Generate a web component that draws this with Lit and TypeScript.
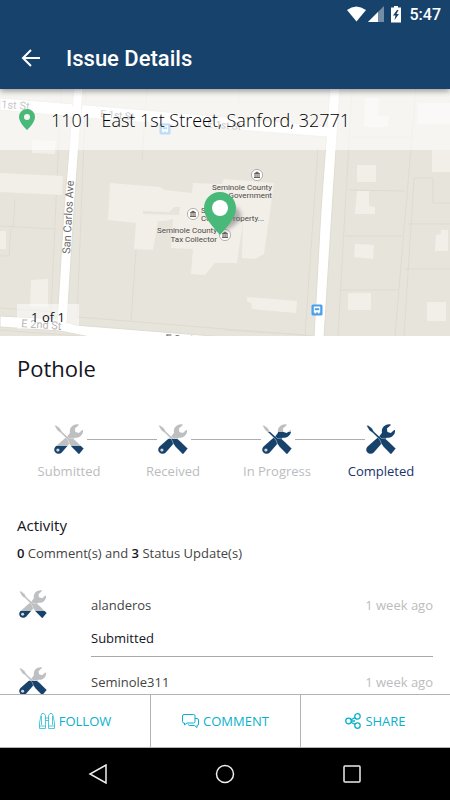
import { LitElement, html, svg, css } from "lit";
import { customElement, property } from "lit/decorators.js";

const FONT = css`"Open Sans", "Noto Sans", sans-serif`;

/** Crossed wrench and screwdriver, filled with navy from the bottom up to `level` (0..30). */
@customElement("tools-icon")
class ToolsIcon extends LitElement {
  @property({ type: Number }) level = 30;

  static styles = css`
    :host { display: block; width: 30px; height: 30px; }
    svg { display: block; width: 100%; height: 100%; }
  `;

  render() {
    const edge = 1 - this.level / 30;
    const full = this.level >= 30;
    return html`<svg viewBox="0 0 30 30" aria-hidden="true">
      <defs>
        <linearGradient id="tone" gradientUnits="userSpaceOnUse" x1="0" y1="0" x2="0" y2="30">
          <stop offset=${edge} stop-color="#bdbfc1"></stop>
          <stop offset=${edge} stop-color="#17426b"></stop>
        </linearGradient>
      </defs>
      <path fill="url(#tone)" d="M24.500.3C19.500-.6 14.800 3.500 16 8.800L13.500 12 1.600 22.600A4.600 4.600 0 0 0 1.400 28.600 4.500 4.500 0 0 0 7.800 28.400L18.600 16 20.600 13.700C25.500 14.300 29.400 10.800 29 6.300L28.200 6 24.800 8.900 21.400 7.900 20.900 4.600 24.600 1.200Z"></path>
      <path fill="url(#tone)" stroke="#fff" stroke-width=".4" d="M.6 1.800 2 1.200 6 4.200 7.800 7.400 15.400 14.400 19 14.400 22 17 29.800 24.600 25 30.500 17.400 22.800 15.200 19.600 14 16 6.600 8.800 3.400 6.600Z"></path>
      <circle cx="3.900" cy="26" r="1.600" fill=${full ? "#17426b" : "#d5d9dd"}></circle>
    </svg>`;
  }
}

const poi = (x: number, y: number) => svg`
  <circle cx=${x} cy=${y} r="5.6" fill="#fff" stroke="#a5a09b" stroke-width=".8"></circle>
  <path fill="#6c625c" d="M${x - 3} ${y - 1.4}l3-2 3 2v.6h-6zM${x - 2.5} ${y - 0.6}h1.1v2.8h-1.1zM${x - 0.5} ${y - 0.6}h1.1v2.8h-1.1zM${x + 1.5} ${y - 0.6}h1.1v2.8h-1.1zM${x - 3} ${y + 2.1}h6v1h-6z"></path>`;

const bus = (x: number, y: number) => svg`
  <rect x=${x - 5.5} y=${y - 5.5} width="11" height="11" rx="1.5" fill="#4ba0ee"></rect>
  <path fill="#fff" d="M${x - 3.2} ${y - 3.4}h6.4v6h-.8v1h-1.4v-1h-2v1h-1.4v-1h-.8z"></path>
  <path fill="#4ba0ee" d="M${x - 2.2} ${y - 1.8}h4.4v2h-4.4z"></path>`;

const pin = svg`<path fill="#48b978" fill-rule="evenodd" d="M8 0A8 8 0 0 0 0 8C0 14 8 21 8 21S16 14 16 8A8 8 0 0 0 8 0ZM8 5A3 3 0 1 1 8 11 3 3 0 0 1 8 5Z"></path>`;

@customElement("street-map")
class StreetMap extends LitElement {
  static styles = css`
    :host { display: block; }
    svg { display: block; width: 100%; height: 100%; }
    .lot { fill: none; stroke: #dfdbd1; stroke-width: 1; }
    .building { fill: #f2efe9; }
    .road { fill: #fff; stroke: #e0dccf; stroke-width: 1; }
    .place { font: 8px Roboto, sans-serif; fill: #4d4845; stroke: #f2efe9; stroke-width: 1px; paint-order: stroke; }
    .street { font: 11px Roboto, sans-serif; fill: #6b6b6b; }
    .small { font-size: 10px; }
    .shadow { fill: #6b6b6b; opacity: .5; filter: blur(2px); }
  `;

  render() {
    return html`<svg viewBox="0 89 450 247" preserveAspectRatio="xMidYMid slice" role="img" aria-label="Map of East 1st Street">
      <rect x="0" y="89" width="450" height="247" fill="#e7e4dc"></rect>
      <path class="lot" d="M61 89L51 315M86 89L77 318M147 89L142 160M136 250L131 321M0 226L55 229M0 308L56 312M77 317L225 329 314 336M240 89L238 104M318 148L305 336M352 89L338 336M352 137H412M350 190L405 191M345 236H402M341 290H398M416 89L395 336M404 336L414 178H433V203H450M408 224H450M405 269H450M11 229L9 256H0M15 200L13 229M0 330L80 336M225 330L306 335M418 111H450"></path>
      <path class="building" d="M32 140L56 141 55 154 32 153ZM0 173L63 176 62 195 0 192ZM110 183L160 187 165 190 192 193 193 183 222 184 224 179 274 183 268 226 264 254 255 259 242 258 243 221 237 263 215 263 205 275 191 274 193 249 171 248 173 219 165 221 158 221 153 250 134 249 136 223 108 220ZM0 231H6V249H0ZM31 280L48 279V307L30 306ZM365 98H379L378 116H389L388 127H364ZM418 103H450V124H417ZM357 165H376L376 182H357ZM357 191H369L369 206 375 207V214H355ZM432 150H450V172H432ZM436 235L441 234V230H448V251H435ZM355 244L374 245 373 259 354 257ZM348 293H371V310H348ZM427 302H446V321H427ZM247 297L297 301 296 313 252 309 251 303 247 301Z"></path>
      <path fill="#e7e4dc" d="M143 211L169 212 174 207 180 207 179 215 143 214Z"></path>
      <path class="road" d="M0 98L75 104 225 117 327 126V137L225 129 75 117 0 110Z"></path>
      <path class="road" d="M0 316L58 319 75 325 225 337H90L60 331 0 327Z"></path>
      <path class="road" d="M74 88H83L74 210 67 323H57L64 210Z"></path>
      <path class="road" d="M330 88H340L332 210 324 337H314L321 210Z"></path>
      <path fill="#fff" d="M67 106h12v10h-12zM58 317h8v8h-8zM318 128h10v8h-10z"></path>
      <g class="street">
        <text transform="translate(1 108) rotate(4)">1st St</text>
        <text class="small" transform="translate(100 117) rotate(5)">E 1st St</text>
        <text class="small" transform="translate(207 127) rotate(5)">E 1st St</text>
        <text transform="translate(70 254) rotate(-87)">San Carlos Ave</text>
        <text transform="translate(21 327) rotate(4)">E 2nd St</text>
        <text transform="translate(165 342) rotate(4)">E 2nd St</text>
      </g>
      ${bus(165, 129)} ${bus(317, 310)}
      ${poi(257, 175)} ${poi(193, 214)} ${poi(225, 235)}
      <g class="place">
        <text x="272" y="190" text-anchor="end">Seminole County</text>
        <text x="272" y="198" text-anchor="end">Government</text>
        <text x="201" y="213">Seminole</text>
        <text x="201" y="221">County Property...</text>
        <text x="217" y="233" text-anchor="end">Seminole County</text>
        <text x="217" y="242" text-anchor="end">Tax Collector</text>
      </g>
      <path class="shadow" d="M222 234L238 222C244 216 240 207 233 207L226 216Z"></path>
      <path fill="#48b978" d="M220 192C211 192 204 199 204 208 204 218 213 227 220 235 227 227 236 218 236 208 236 199 229 192 220 192Z"></path>
      <circle cx="220" cy="208" r="8" fill="#fff"></circle>
    </svg>`;
  }
}

@customElement("app-root")
class AppRoot extends LitElement {
  static styles = css`
    :host { display: flex; flex-direction: column; height: 100vh; overflow: hidden; background: #fff; color: #14141e; font: 13px ${FONT}; }
    * { box-sizing: border-box; }
    h1, h2, h3, p, ol, ul { margin: 0; padding: 0; font-weight: inherit; list-style: none; }
    button { appearance: none; border: 0; background: none; padding: 0; margin: 0; font: inherit; color: inherit; cursor: pointer; }
    svg { display: block; flex: none; }

    .top { flex: none; background: #17426b; color: #fff; font-family: Roboto, sans-serif; position: relative; box-shadow: 0 2px 6px rgb(0 0 0 / 40%); z-index: 2; }
    .status { display: flex; justify-content: flex-end; align-items: center; height: 28px; padding-right: 9px; font-size: 16px; font-weight: 500; }
    .clock { margin-left: 8px; }
    .bar { display: flex; align-items: center; gap: 24px; height: 61px; padding-left: 20px; }
    .bar h1 { font-size: 22px; font-weight: 500; }

    .map { flex: none; position: relative; height: 247px; }
    street-map { height: 100%; }
    .address { position: absolute; inset: 0 0 auto; height: 61px; display: flex; align-items: center; gap: 16px; padding-left: 19px; background: rgb(255 255 255 / 62%); font-size: 18px; font-weight: 300; color: #000; white-space: pre; }
    .count { position: absolute; left: 17px; bottom: 7px; width: 62px; height: 25px; line-height: 26px; text-align: center; background: rgb(255 255 255 / 50%); }

    main { flex: 1; min-height: 0; overflow: hidden; padding: 0 17px; }
    main h2 { font-size: 22px; line-height: 30px; margin-top: 17px; }
    .steps { display: flex; margin-top: 41px; }
    .step { flex: 1; display: flex; flex-direction: column; align-items: center; gap: 7px; position: relative; color: #bbbcbe; line-height: 20px; white-space: nowrap; }
    .step + .step::before { content: ""; position: absolute; top: 15px; right: calc(50% + 16px); left: calc(18px - 50%); height: 1px; background: #aeaeae; }
    .step.done { color: #17346b; }
    h3 { font-size: 15px; line-height: 20px; margin-top: 34px; }
    .summary { line-height: 20px; margin-top: 8px; color: #444; }
    .summary b { font-weight: 600; color: #14141e; }
    .feed { margin-top: 22px; }
    .entry { display: grid; grid-template-columns: 74px 1fr; padding-bottom: 5px; }
    .entry tools-icon { width: 28px; height: 28px; margin: 5px 2px; }
    .body { border-bottom: 1px solid #a9a9a9; height: 72px; }
    .meta { display: flex; justify-content: space-between; line-height: 20px; padding-top: 10px; color: #444; }
    .meta time { color: #bbbcbe; }
    .what { line-height: 20px; margin-top: 13px; }

    .actions { flex: none; display: grid; grid-template-columns: repeat(3, 1fr); height: 54px; border: solid #b3b3b3; border-width: 1px 0; background: #fff; }
    .actions button { display: flex; align-items: center; justify-content: center; gap: 4px; color: #08b1cd; }
    .actions button + button { border-left: 1px solid #b3b3b3; }
    .nav { flex: none; display: flex; justify-content: space-between; align-items: center; height: 52px; background: #000; padding: 0 84px; }
    .nav button { width: 28px; height: 28px; }
    .actions svg, .nav svg { fill: none; }
    .nav svg { stroke: #eee; stroke-width: 1.5; margin: auto; }
    .actions svg { stroke: #08b1cd; stroke-width: 1; }
    .actions .fine { stroke-width: .7; }
  `;

  steps = [
    { name: "Submitted", level: 8 },
    { name: "Received", level: 15 },
    { name: "In Progress", level: 22 },
    { name: "Completed", level: 30 },
  ];

  feed = [
    { who: "alanderos", when: "1 week ago", what: "Submitted", level: 8 },
    { who: "Seminole311", when: "1 week ago", what: "Received", level: 15 },
  ];

  render() {
    return html`
      <header class="top">
        <div class="status">
          <svg width="46" height="18" viewBox="0 0 46 18" fill="#fff" aria-hidden="true">
            <path d="M3 5Q12-2 22 5L12.500 16.500Z"></path>
            <path d="M40 1V17H24Z" opacity=".4"></path><path d="M34 7V17H24Z"></path>
          </svg>
          <svg width="12" height="18" viewBox="0 0 12 18" aria-hidden="true">
            <path fill="#fff" d="M4 1H8V2.500H11V17.500H1V2.500H4Z"></path><path fill="#17426b" d="M7 5L3 10.500H5.500L4.500 15 9 9H6.500L8.500 5Z"></path>
          </svg>
          <span class="clock">5:47</span>
        </div>
        <div class="bar">
          <button aria-label="Back"><svg width="22" height="20" viewBox="0 0 22 20" fill="none" stroke="#fff" stroke-width="2"><path d="M20 9H3.500M11 1L3 9 11 17"></path></svg></button>
          <h1>Issue Details</h1>
        </div>
      </header>
      <section class="map">
        <street-map></street-map>
        <div class="address"><svg width="16" height="21" viewBox="0 0 16 21">${pin}</svg><span>1101  East 1st Street, Sanford, 32771</span></div>
        <div class="count">1 of 1</div>
      </section>
      <main>
        <h2>Pothole</h2>
        <ol class="steps">
          ${this.steps.map((s) => html`<li class="step ${s.level === 30 ? "done" : ""}"><tools-icon .level=${s.level}></tools-icon>${s.name}</li>`)}
        </ol>
        <h3>Activity</h3>
        <p class="summary"><b>0</b> Comment(s) and <b>3</b> Status Update(s)</p>
        <ul class="feed">
          ${this.feed.map((f) => html`<li class="entry">
            <tools-icon .level=${f.level}></tools-icon>
            <div class="body">
              <div class="meta"><span>${f.who}</span><time>${f.when}</time></div>
              <p class="what">${f.what}</p>
            </div>
          </li>`)}
        </ul>
      </main>
      <div class="actions">
        <button><svg class="fine" width="16" height="16" viewBox="0 0 16 16"><path d="M.5 15.500V10L2 2.500 3 .5H5L6.500 2.500V15.500ZM15.500 15.500V10L14 2.500 13 .5H11L9.500 2.500V15.500ZM.5 13H6.500M9.500 13H15.500M6.500 5H9.500M6.500 7.500H9.500M2.500 3V12M13.500 3V12"></path></svg>FOLLOW</button>
        <button><svg width="17" height="14" viewBox="0 0 17 14"><path d="M2 .5H11.500Q13 .5 13 2V7.500Q13 9 11.500 9H5L2.500 11V9H2Q.5 9 .5 7.500V2Q.5 .5 2 .5ZM13 4.500H15Q16.500 4.500 16.500 6V10Q16.500 11.500 15 11.500V13.500L12.500 11.500H7.500L6 10.500"></path></svg>COMMENT</button>
        <button><svg width="16" height="16" viewBox="0 0 16 16"><g stroke-width="1.300"><circle cx="3.500" cy="8" r="2.800"></circle><circle cx="12.500" cy="3.400" r="2.700"></circle><circle cx="12.500" cy="12.600" r="2.700"></circle><path d="M6 6.800L10 4.600M6 9.200L10 11.400M6.300 8H10"></path></g></svg>SHARE</button>
      </div>
      <nav class="nav">
        <button aria-label="Back"><svg width="20" height="20" viewBox="0 0 20 20"><path d="M18 1V19L2 10Z"></path></svg></button>
        <button aria-label="Home"><svg width="20" height="20" viewBox="0 0 20 20"><circle cx="10" cy="10" r="8.500"></circle></svg></button>
        <button aria-label="Recent apps"><svg width="20" height="20" viewBox="0 0 20 20"><rect x="2" y="2" width="16" height="16" rx="1"></rect></svg></button>
      </nav>`;
  }
}
